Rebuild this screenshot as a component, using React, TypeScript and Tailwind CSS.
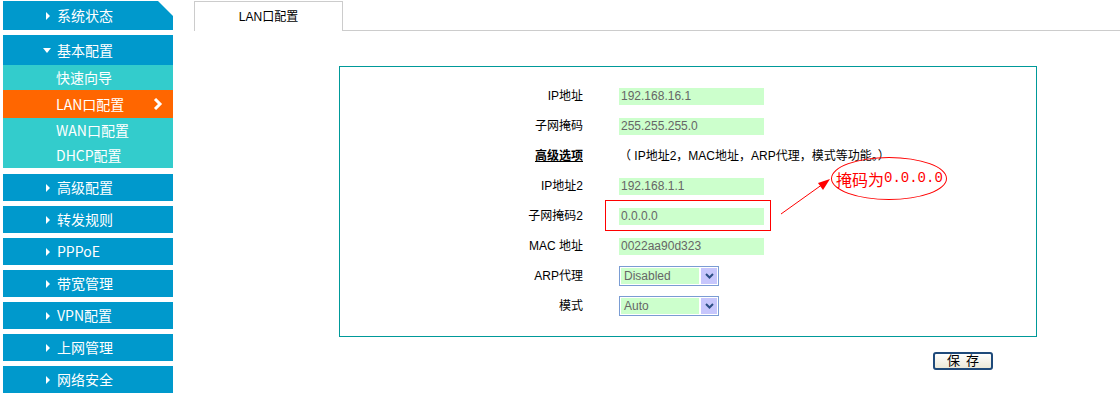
import React from 'react';

const cjk = '"Liberation Sans", "Noto Sans CJK SC", sans-serif';
const menuFont = '"Noto Sans CJK SC", "Liberation Sans", sans-serif';

function Tri({ down }: { down?: boolean }) {
  return down ? (
    <svg width="8" height="5" viewBox="0 0 8 5" className="shrink-0">
      <polygon points="0,0 8,0 4,5" fill="#fff" />
    </svg>
  ) : (
    <svg width="4" height="8" viewBox="0 0 4 8" className="shrink-0">
      <polygon points="0,0 4,4 0,8" fill="#fff" />
    </svg>
  );
}

function MenuItem({ label, h = 'h-[27px]', down, cut }: { label: string; h?: string; down?: boolean; cut?: boolean }) {
  return (
    <div
      className={`flex items-center bg-[#0099cc] text-white text-[14px] ${h} ${down ? 'pl-[40px] gap-[6px]' : 'pl-[43px] gap-[7px]'} ${
        cut ? '[clip-path:polygon(0_0,calc(100%-15px)_0,100%_15px,100%_100%,0_100%)]' : ''
      }`}
    >
      <Tri down={down} />
      <span>{label}</span>
    </div>
  );
}

function Field({ value }: { value: string }) {
  return (
    <div className="w-[145px] h-[17px] bg-[#ccffcc] pl-[2px] text-[12px] leading-[17px] text-[#666]">{value}</div>
  );
}

function Select({ value }: { value: string }) {
  return (
    <div className="w-[100px] h-[20px] border border-[#7a9cd3] flex items-center p-[1px] gap-[2px]">
      <div className="flex-1 h-full bg-[#ccffcc] pl-[3px] text-[12px] leading-[16px] text-[#666]">{value}</div>
      <div className="w-[16px] h-full bg-[#c6c6fc] flex items-center justify-center">
        <svg width="9" height="6" viewBox="0 0 9 6">
          <polyline points="1,1 4.5,4.5 8,1" fill="none" stroke="#2c4f84" strokeWidth="2" />
        </svg>
      </div>
    </div>
  );
}

export default function App() {
  const rows: { label: React.ReactNode; field: React.ReactNode }[] = [
    { label: 'IP地址', field: <Field value="192.168.16.1" /> },
    { label: '子网掩码', field: <Field value="255.255.255.0" /> },
    {
      label: <span className="font-bold underline">高级选项</span>,
      field: <span className="text-[12px] whitespace-nowrap">（ IP地址2，MAC地址，ARP代理，模式等功能。）</span>,
    },
    { label: 'IP地址2', field: <Field value="192.168.1.1" /> },
    { label: '子网掩码2', field: <Field value="0.0.0.0" /> },
    { label: 'MAC 地址', field: <Field value="0022aa90d323" /> },
    { label: 'ARP代理', field: <Select value="Disabled" /> },
    { label: '模式', field: <Select value="Auto" /> },
  ];

  return (
    <div className="relative flex w-[1120px] h-[395px] bg-white overflow-hidden" style={{ fontFamily: cjk }}>
      {/* Sidebar */}
      <aside className="ml-[3px] mt-[1px] w-[170px] flex flex-col shrink-0" style={{ fontFamily: menuFont }}>
        <MenuItem label="系统状态" h="h-[29px]" cut />
        <div className="mt-[5px]">
          <MenuItem label="基本配置" h="h-[30px]" down />
          <div className="bg-[#33cccc] text-white text-[14px]">
            <div className="h-[25px] pl-[53px] flex items-center">快速向导</div>
            <div className="h-[28px] pl-[53px] pr-[10px] flex items-center justify-between bg-[#ff6600]">
              <span>LAN口配置</span>
              <svg width="10" height="12" viewBox="0 0 10 12">
                <polyline points="2,1 7,6 2,11" fill="none" stroke="#fff" strokeWidth="3" />
              </svg>
            </div>
            <div className="h-[25px] pl-[53px] flex items-center">WAN口配置</div>
            <div className="h-[25px] pl-[53px] flex items-center">DHCP配置</div>
          </div>
        </div>
        <div className="mt-[6px] flex flex-col gap-[5px]">
          <MenuItem label="高级配置" />
          <MenuItem label="转发规则" />
          <MenuItem label="PPPoE" />
          <MenuItem label="带宽管理" />
          <MenuItem label="VPN配置" />
          <MenuItem label="上网管理" />
          <MenuItem label="网络安全" />
        </div>
      </aside>

      {/* Main */}
      <main className="flex-1 flex flex-col">
        <div className="flex items-end h-[31px] pt-[1px]">
          <div className="w-[21px] h-full" />
          <div className="w-[149px] h-[30px] border-t border-l border-r border-[#cccccc] flex items-center justify-center text-[12px] text-black">
            LAN口配置
          </div>
          <div className="flex-1 h-full border-b border-[#cccccc]" />
        </div>

        <div className="ml-[166px] mt-[35px] w-[698px] h-[271px] border border-[#009999] pt-[14px]">
          <div className="grid grid-cols-[243px_1fr] gap-x-[36px]">
            {rows.map((r, i) => (
              <React.Fragment key={i}>
                <div className="h-[30px] flex items-center justify-end text-[12px] text-black whitespace-nowrap">{r.label}</div>
                <div className="h-[30px] flex items-center">{r.field}</div>
              </React.Fragment>
            ))}
          </div>
        </div>

        <div className="ml-[760px] mt-[11px]">
          <button className="w-[60px] h-[18px] rounded-[3px] border-2 border-[#1f4a7a] bg-gradient-to-b from-white to-[#ece9d8] text-[13px] leading-[14px] text-black tracking-[6px] pl-[6px]">
            保存
          </button>
        </div>
      </main>

      {/* Annotations */}
      <div className="absolute left-[605px] top-[200px] w-[166px] h-[31px] border border-[#ff0000]" />
      <svg className="absolute left-[775px] top-[172px]" width="62" height="48" viewBox="0 0 62 48">
        <line x1="6" y1="42" x2="48" y2="12" stroke="#ff0000" strokeWidth="1" />
        <polygon points="55,7 43,11 48,18" fill="#ff0000" />
      </svg>
      <div className="absolute left-[831px] top-[157px] w-[116px] h-[43px] rounded-[50%] border border-[#ff0000] flex items-center pl-[4px] text-[#ff0000]">
        <span className="text-[16px]" style={{ fontFamily: menuFont }}>掩码为</span>
        <span className="text-[14px] font-['Liberation_Mono',monospace]">0.0.0.0</span>
      </div>
    </div>
  );
}
